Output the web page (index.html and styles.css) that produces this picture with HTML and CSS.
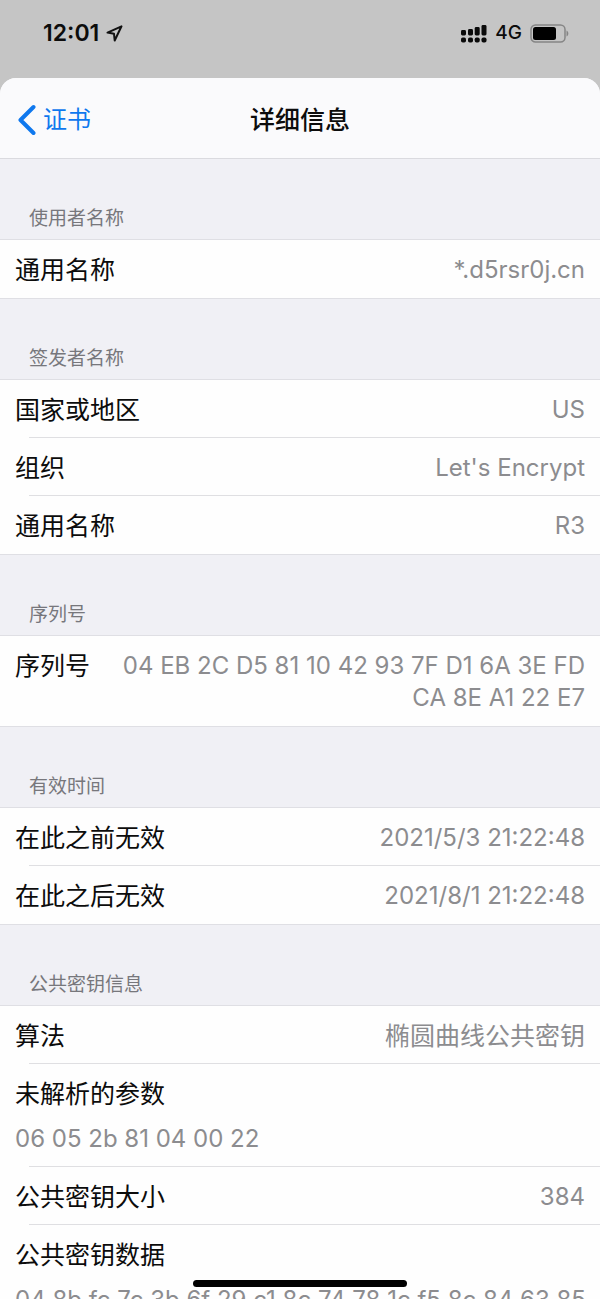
FILE: index.html
```
<!DOCTYPE html>
<html lang="zh-CN">
<head>
<meta charset="utf-8">
<meta name="viewport" content="width=device-width, initial-scale=1">
<title>详细信息</title>
<link rel="stylesheet" href="styles.css">
</head>
<body>
<div class="status">
  <div class="status-left">
    <span class="clock">12:01</span>
    <svg width="17" height="17" viewBox="0 0 17 17" fill="none" stroke="#111" stroke-width="2" stroke-linejoin="round"><path d="M15.500 1.300 1.500 7.600 8 8.800 8.700 15.500Z"/></svg>
  </div>
  <div class="status-right">
    <svg width="26" height="19" viewBox="0 0 26 19" fill="#0a0a0a">
      <rect x="0" y="6" width="5" height="5.500" rx="1.400"/><rect x="7" y="5" width="5" height="6.500" rx="1.400"/><rect x="13.700" y="3" width="5" height="8.500" rx="1.400"/><rect x="20.500" y="1" width="5" height="10.500" rx="1.400"/>
      <rect x="0" y="13.500" width="5" height="5" rx="1.800"/><rect x="7" y="13.500" width="5" height="5" rx="1.800"/><rect x="13.700" y="13.500" width="5" height="5" rx="1.800"/><rect x="20.500" y="13.500" width="5" height="5" rx="1.800"/>
    </svg>
    <span class="network">4G</span>
    <svg width="39" height="19" viewBox="0 0 39 19"><rect x="1" y="1" width="34" height="17" rx="4.500" fill="none" stroke="#858585" stroke-width="1.500"/><rect x="3" y="3" width="23" height="13" rx="2.500" fill="#000"/><path d="M36.500 6.500c2.400 1 2.400 5 0 6z" fill="#858585"/></svg>
  </div>
</div>
<main class="sheet">
  <header class="nav">
    <button class="back" type="button">
      <svg width="18" height="32" viewBox="0 0 18 32" fill="none" stroke="currentColor" stroke-width="4" stroke-linecap="round" stroke-linejoin="round"><path d="M15.500 3 2.500 16 15.500 29"/></svg>
      <span>证书</span>
    </button>
    <h1 class="title">详细信息</h1>
  </header>
  <div class="content">
    <section>
      <h2 class="caption">使用者名称</h2>
      <dl class="group">
        <div class="row"><dt>通用名称</dt><dd>*.d5rsr0j.cn</dd></div>
      </dl>
    </section>
    <section>
      <h2 class="caption">签发者名称</h2>
      <dl class="group">
        <div class="row"><dt>国家或地区</dt><dd>US</dd></div>
        <div class="row"><dt>组织</dt><dd>Let's Encrypt</dd></div>
        <div class="row"><dt>通用名称</dt><dd>R3</dd></div>
      </dl>
    </section>
    <section>
      <h2 class="caption">序列号</h2>
      <dl class="group">
        <div class="row"><dt>序列号</dt><dd>04 EB 2C D5 81 10 42 93 7F D1 6A 3E FD CA 8E A1 22 E7</dd></div>
      </dl>
    </section>
    <section>
      <h2 class="caption">有效时间</h2>
      <dl class="group">
        <div class="row"><dt>在此之前无效</dt><dd>2021/5/3 21:22:48</dd></div>
        <div class="row"><dt>在此之后无效</dt><dd>2021/8/1 21:22:48</dd></div>
      </dl>
    </section>
    <section>
      <h2 class="caption">公共密钥信息</h2>
      <dl class="group">
        <div class="row"><dt>算法</dt><dd class="han">椭圆曲线公共密钥</dd></div>
        <div class="row stacked"><dt>未解析的参数</dt><dd>06 05 2b 81 04 00 22</dd></div>
        <div class="row"><dt>公共密钥大小</dt><dd>384</dd></div>
        <div class="row stacked"><dt>公共密钥数据</dt><dd>04 8b fc 7c 3b 6f 29 c1 8c 74 78 1c f5 8c 84 63 85</dd></div>
      </dl>
    </section>
  </div>
</main>
<div class="home-indicator"></div>
</body>
</html>
```
FILE: styles.css
```
* { box-sizing: border-box; }

body {
  margin: 0;
  height: 100vh;
  display: flex;
  flex-direction: column;
  overflow: hidden;
  background: #c5c5c5;
  color: #0c0c0c;
  font-family: Inter, "Noto Sans CJK SC", sans-serif;
  font-size: 24px;
  line-height: 32px;
}

h1, h2, dl, dd { margin: 0; }

svg { display: block; flex: none; }

.status {
  flex: none;
  display: flex;
  justify-content: space-between;
  align-items: flex-start;
  height: 78px;
  padding: 17px 31px 0 43px;
}

.status-left, .status-right {
  display: flex;
  align-items: center;
  height: 32px;
}

.status-left { gap: 7px; }
.status-right { gap: 8px; }

.clock { font-size: 23px; font-weight: 600; }
.network { font-size: 19px; font-weight: 500; }

.sheet {
  flex: 1;
  min-height: 0;
  display: flex;
  flex-direction: column;
  overflow: hidden;
  border-radius: 16px 16px 0 0;
  background: #f0f0f5;
}

.nav {
  flex: none;
  display: grid;
  grid-template-columns: 1fr auto 1fr;
  align-items: center;
  height: 81px;
  padding: 3px 18px 0;
  border-bottom: 1px solid #dadadf;
  background: #fafafc;
}

.back {
  justify-self: start;
  display: flex;
  align-items: center;
  gap: 7px;
  padding: 0;
  border: 0;
  background: none;
  color: #0f78ee;
  font: inherit;
}

.title { font-size: 25px; font-weight: 500; line-height: 32px; }

.content {
  flex: 1;
  min-height: 0;
  overflow: hidden;
}

.caption {
  padding: 47px 29px 7px;
  color: #77777c;
  font-size: 19px;
  font-weight: 400;
  line-height: 26px;
}

.group {
  border: solid #dfdfe4;
  border-width: 1px 0;
  background: #fefefe;
}

.row {
  display: flex;
  gap: 24px;
  justify-content: space-between;
  padding: 14px 15px 12px;
}

.row:not(:last-child) {
  background: linear-gradient(#dfdfe2, #dfdfe2) 29px 100% / 100% 1px no-repeat;
}

.row dt { flex: none; font-size: 25px; }

.row dd {
  color: #8c8c8f;
  text-align: right;
}

.row .han { font-size: 25px; }

.stacked { flex-direction: column; gap: 13px; }
.stacked dd { text-align: left; white-space: nowrap; }

.home-indicator {
  position: fixed;
  bottom: 12px;
  left: 50%;
  width: 214px;
  height: 7px;
  margin-left: -107px;
  border-radius: 4px;
  background: #000;
}
```
